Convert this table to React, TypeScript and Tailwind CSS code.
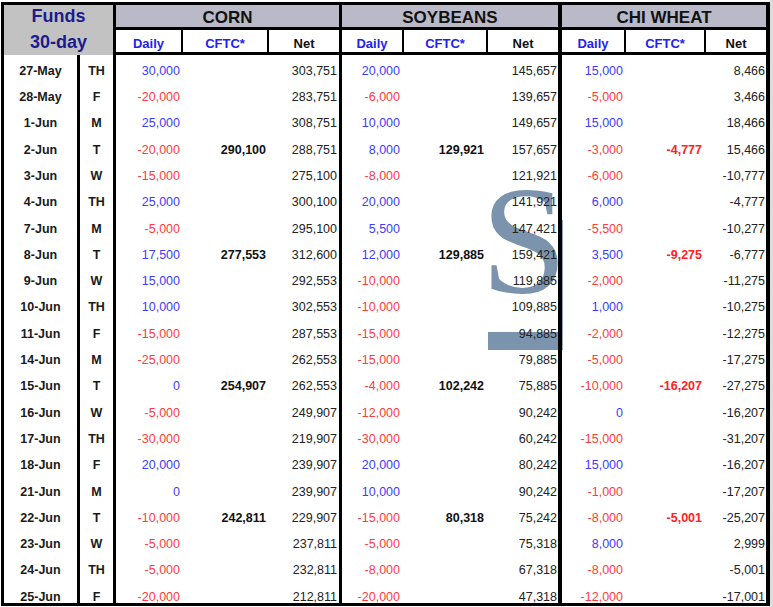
import React from "react";

type Row = string[];

// date, day, corn daily/cftc/net, soy daily/cftc/net, wheat daily/cftc/net
const rows: Row[] = [
  ["27-May", "TH", "30,000", "", "303,751", "20,000", "", "145,657", "15,000", "", "8,466"],
  ["28-May", "F", "-20,000", "", "283,751", "-6,000", "", "139,657", "-5,000", "", "3,466"],
  ["1-Jun", "M", "25,000", "", "308,751", "10,000", "", "149,657", "15,000", "", "18,466"],
  ["2-Jun", "T", "-20,000", "290,100", "288,751", "8,000", "129,921", "157,657", "-3,000", "-4,777", "15,466"],
  ["3-Jun", "W", "-15,000", "", "275,100", "-8,000", "", "121,921", "-6,000", "", "-10,777"],
  ["4-Jun", "TH", "25,000", "", "300,100", "20,000", "", "141,921", "6,000", "", "-4,777"],
  ["7-Jun", "M", "-5,000", "", "295,100", "5,500", "", "147,421", "-5,500", "", "-10,277"],
  ["8-Jun", "T", "17,500", "277,553", "312,600", "12,000", "129,885", "159,421", "3,500", "-9,275", "-6,777"],
  ["9-Jun", "W", "15,000", "", "292,553", "-10,000", "", "119,885", "-2,000", "", "-11,275"],
  ["10-Jun", "TH", "10,000", "", "302,553", "-10,000", "", "109,885", "1,000", "", "-10,275"],
  ["11-Jun", "F", "-15,000", "", "287,553", "-15,000", "", "94,885", "-2,000", "", "-12,275"],
  ["14-Jun", "M", "-25,000", "", "262,553", "-15,000", "", "79,885", "-5,000", "", "-17,275"],
  ["15-Jun", "T", "0", "254,907", "262,553", "-4,000", "102,242", "75,885", "-10,000", "-16,207", "-27,275"],
  ["16-Jun", "W", "-5,000", "", "249,907", "-12,000", "", "90,242", "0", "", "-16,207"],
  ["17-Jun", "TH", "-30,000", "", "219,907", "-30,000", "", "60,242", "-15,000", "", "-31,207"],
  ["18-Jun", "F", "20,000", "", "239,907", "20,000", "", "80,242", "15,000", "", "-16,207"],
  ["21-Jun", "M", "0", "", "239,907", "10,000", "", "90,242", "-1,000", "", "-17,207"],
  ["22-Jun", "T", "-10,000", "242,811", "229,907", "-15,000", "80,318", "75,242", "-8,000", "-5,001", "-25,207"],
  ["23-Jun", "W", "-5,000", "", "237,811", "-5,000", "", "75,318", "8,000", "", "2,999"],
  ["24-Jun", "TH", "-5,000", "", "232,811", "-8,000", "", "67,318", "-8,000", "", "-5,001"],
  ["25-Jun", "F", "-20,000", "", "212,811", "-20,000", "", "47,318", "-12,000", "", "-17,001"],
];

const dailyColor = (v: string) => (v.startsWith("-") ? "text-[#ff3b3b]" : "text-[#3c3cff]");

type Commodity = {
  name: string;
  offset: number;
  widths: [string, string, string];
  pads: [string, string, string];
  cftcRed?: boolean;
  border: string;
};

const commodities: Commodity[] = [
  {
    name: "CORN",
    offset: 2,
    widths: ["w-[67px]", "w-[86px]", "w-[70px]"],
    pads: ["pr-[3px]", "pr-[3px]", "pr-[2px]"],
    border: "border-l-[3px]",
  },
  {
    name: "SOYBEANS",
    offset: 5,
    widths: ["w-[62px]", "w-[84px]", "w-[70px]"],
    pads: ["pr-[4px]", "pr-[4px]", "pr-[1px]"],
    border: "border-l-[3px]",
  },
  {
    name: "CHI WHEAT",
    offset: 8,
    widths: ["w-[64px]", "w-[80px]", "w-[60px]"],
    pads: ["pr-[3px]", "pr-[4px]", "pr-[1px]"],
    cftcRed: true,
    border: "border-l-4",
  },
];

function CommodityGroup({ c }: { c: Commodity }) {
  return (
    <div className={`flex flex-col ${c.border} border-black`}>
      <div className="h-[25px] shrink-0 bg-[#b9b9c7] border-b-[3px] border-black flex items-center justify-center pt-[2px] text-[17px] leading-none font-bold text-[#111]">
        {c.name}
      </div>
      <div className="h-[25px] shrink-0 border-b-[3px] border-black flex">
        {["Daily", "CFTC*", "Net"].map((h, i) => (
          <div
            key={h}
            className={`${c.widths[i]} ${i < 2 ? "border-r-2 border-black" : ""} flex items-end justify-center pb-[1px] text-[13px] leading-[14px] font-bold ${
              i < 2 ? "text-[#2222ee]" : "text-[#111]"
            }`}
          >
            {h}
          </div>
        ))}
      </div>
      <div className="pt-[3px] flex flex-col">
        {rows.map((r) => {
          const d = r[c.offset];
          const f = r[c.offset + 1];
          const n = r[c.offset + 2];
          return (
            <div key={r[0]} className="h-[26.3px] flex items-center text-[12.5px] shrink-0">
              <div className={`${c.widths[0]} ${c.pads[0]} text-right ${dailyColor(d)}`}>{d}</div>
              <div
                className={`${c.widths[1]} ${c.pads[1]} text-right font-bold ${
                  c.cftcRed ? "text-[#ff2222]" : "text-[#111]"
                }`}
              >
                {f}
              </div>
              <div className={`${c.widths[2]} ${c.pads[2]} text-right text-[#222]`}>{n}</div>
            </div>
          );
        })}
      </div>
    </div>
  );
}

export default function App() {
  return (
    <div className="relative w-[773px] h-[607px] bg-white overflow-hidden font-['Liberation_Sans',Arial,sans-serif]">
      {/* faded logo watermark behind the soybeans column */}
      <div className="absolute left-[481px] top-[163px] text-[155px] leading-none font-['Liberation_Serif','Times_New_Roman',serif] text-[#4f6f91] opacity-75 select-none">
        S
      </div>
      <div className="absolute left-[488px] top-[332px] w-[72px] h-[18px] bg-[#4f6f91] opacity-75" />
      <div className="absolute left-[559px] top-[220px] w-[4px] h-[130px] bg-[#4f6f91] opacity-60" />
      <div className="absolute right-0 top-0 w-[3px] h-full bg-[#dcdcdc]" />

      <div className="relative ml-[1px] mt-[2px] w-[769px] h-[604px] border-[3px] border-r-4 border-black flex overflow-hidden">
        <div className="w-[109px] flex flex-col shrink-0">
          <div className="h-[50px] shrink-0 bg-[#c2c2c2] flex flex-col items-center justify-center pb-[3px] text-[18px] font-bold leading-[26px] text-[#1c1c8e]">
            <span>Funds</span>
            <span>30-day</span>
          </div>
          <div className="flex flex-1">
            <div className="w-[73px] pt-[3px] flex flex-col">
              {rows.map((r) => (
                <div key={r[0]} className="h-[26.3px] shrink-0 flex items-center justify-center text-[12.5px] font-bold text-[#1a1a1a]">
                  {r[0]}
                </div>
              ))}
            </div>
            <div className="w-[36px] border-l-[3px] border-black pt-[3px] flex flex-col">
              {rows.map((r) => (
                <div key={r[0]} className="h-[26.3px] shrink-0 flex items-center justify-center text-[12.5px] font-bold text-[#1a1a1a]">
                  {r[1]}
                </div>
              ))}
            </div>
          </div>
        </div>
        {commodities.map((c) => (
          <CommodityGroup key={c.name} c={c} />
        ))}
      </div>
    </div>
  );
}
